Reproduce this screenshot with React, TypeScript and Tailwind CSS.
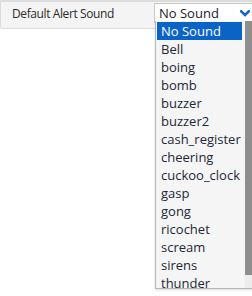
import React from 'react';

const sounds = [
  'No Sound',
  'Bell',
  'boing',
  'bomb',
  'buzzer',
  'buzzer2',
  'cash_register',
  'cheering',
  'cuckoo_clock',
  'gasp',
  'gong',
  'ricochet',
  'scream',
  'sirens',
  'thunder',
];

const Chevron = () => (
  <svg width="10" height="7" viewBox="0 0 10 7" className="text-[#1565c0]">
    <path d="M1.2 1.4 L5 5 L8.8 1.4" fill="none" stroke="currentColor" strokeWidth="2.6" strokeLinecap="square" />
  </svg>
);

export default function App() {
  const selected = 'No Sound';

  return (
    <div className="w-[252px] h-[296px] bg-white relative overflow-hidden font-['Open_Sans',sans-serif]">
      <div className="h-[29px] bg-[#f4f4f4] border-t-2 border-l border-b border-[#dcdcdc] rounded-bl-[3px] flex items-start pt-[1px]">
        <div className="w-[153px] shrink-0 pl-[11px] pt-[2px] text-[12px] tracking-[-0.4px] leading-[18px] text-[#2e2a2a]">
          Default Alert Sound
        </div>
        <div className="w-[110px] shrink-0 h-[20px] bg-white border border-[#c8c8c8] flex items-center justify-between pl-[4px] pr-[13px]">
          <span className="text-[13px] leading-[18px] text-[#1b1b2b]">{selected}</span>
          <Chevron />
        </div>
      </div>

      <div className="absolute left-[155px] top-[21px] w-[100px] h-[268px] bg-[#f5f5f5] border-l border-b border-[#b8b8b8] shadow-[0_1px_2px_rgba(0,0,0,0.15)] flex">
        <div className="flex-1 flex flex-col pt-[1px] pl-[1px] pr-[3px]">
          {sounds.map((s) => (
            <div
              key={s}
              className={`h-[18px] pl-[4px] text-[13px] leading-[18px] whitespace-nowrap ${
                s === selected ? 'bg-[#0a64c8] text-white' : 'text-[#1c2838]'
              }`}
            >
              {s}
            </div>
          ))}
        </div>
        <div className="w-[10px] flex flex-col bg-[#ececec]">
          <div className="h-[254px] bg-[#8e8e8e]" />
        </div>
      </div>
    </div>
  );
}
